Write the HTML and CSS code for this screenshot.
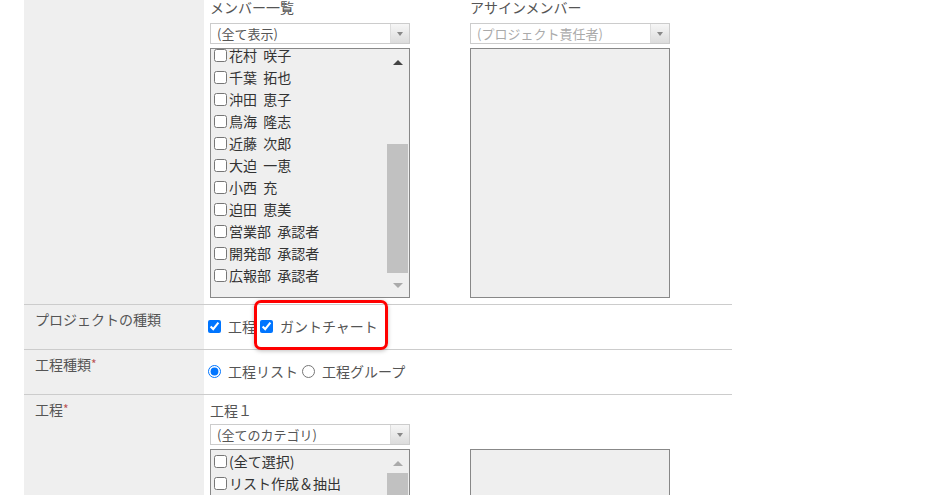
FILE: index.html
```html
<!DOCTYPE html>
<html>
	<head>
		<meta charset="UTF-8">
		<title>プロジェクト設定</title>
		<link rel="stylesheet" href="styles.css">
	</head>
	<body>
		<div class="form">
			<div class="row row-members">
				<div class="label"></div>
				<div class="field">
					<div class="pick">
						<div class="pick-title">メンバー一覧</div>
						<div class="select"><span>(全て表示)</span><i class="drop"></i></div>
						<div class="listbox tall">
							<ul class="items shifted">
								<li><input type="checkbox">花村 咲子</li>
								<li><input type="checkbox">千葉 拓也</li>
								<li><input type="checkbox">沖田 恵子</li>
								<li><input type="checkbox">鳥海 隆志</li>
								<li><input type="checkbox">近藤 次郎</li>
								<li><input type="checkbox">大迫 一恵</li>
								<li><input type="checkbox">小西 充</li>
								<li><input type="checkbox">迫田 恵美</li>
								<li><input type="checkbox">営業部 承認者</li>
								<li><input type="checkbox">開発部 承認者</li>
								<li><input type="checkbox">広報部 承認者</li>
							</ul>
							<div class="bar">
								<span class="up"></span>
								<span class="gap g1"></span>
								<span class="thumb t1"></span>
								<span class="down"></span>
							</div>
						</div>
					</div>
					<div class="pick">
						<div class="pick-title">アサインメンバー</div>
						<div class="select off"><span>(プロジェクト責任者)</span><i class="drop"></i></div>
						<div class="listbox tall"></div>
					</div>
				</div>
			</div>

			<div class="row">
				<div class="label">プロジェクトの種類</div>
				<div class="field opts">
					<label><input type="checkbox" checked>工程</label>
					<label class="marked"><input type="checkbox" checked>ガントチャート</label>
				</div>
			</div>

			<div class="row">
				<div class="label">工程種類<em>*</em></div>
				<div class="field opts">
					<label><input type="radio" name="kind" checked>工程リスト</label>
					<label><input type="radio" name="kind">工程グループ</label>
				</div>
			</div>

			<div class="row">
				<div class="label">工程<em>*</em></div>
				<div class="field">
					<div class="pick">
						<div class="pick-title">工程１</div>
						<div class="select"><span>(全てのカテゴリ)</span><i class="drop"></i></div>
						<div class="listbox">
							<ul class="items">
								<li><input type="checkbox">(全て選択)</li>
								<li><input type="checkbox">リスト作成＆抽出</li>
								<li><input type="checkbox">顧客リスト確認</li>
							</ul>
							<div class="bar">
								<span class="up dim"></span>
								<span class="thumb t2"></span>
							</div>
						</div>
					</div>
					<div class="pick">
						<div class="pick-title"></div>
						<div class="select blank"></div>
						<div class="listbox"></div>
					</div>
				</div>
			</div>
		</div>
	</body>
</html>
```

FILE: styles.css
```css
body{
	margin: 0;
	background: #fff;
	font-family: "Noto Sans CJK JP", "Liberation Sans", sans-serif;
	font-size: 14px;
	color: #555;
	overflow: hidden;
}
.form{
	width: 708px;
	margin-left: 24px;
}
.row{
	display: flex;
	border-bottom: 1px solid #ccc;
}
.label{
	width: 169px;
	flex: none;
	background: #efefef;
	padding: 4px 0 0 11px;
	line-height: 20px;
}
.label em{
	font-style: normal;
	color: #b55;
	font-size: 12px;
	vertical-align: top;
}
.field{
	flex: 1;
	display: flex;
	gap: 60px;
	padding: 0 0 0 6px;
}
.row-members .field{
	padding-bottom: 6px;
}
.row-members .label{
	height: 300px;
}

/* member / process pickers */
.pick{
	width: 200px;
}
.pick-title{
	height: 15px;
	line-height: 15px;
	margin-top: 0;
	margin-bottom: 8px;
	white-space: nowrap;
}
.row:last-child .pick-title{
	margin-top: 8px;
	margin-bottom: 6px;
}
.select{
	height: 19px;
	border: 1px solid #ccc;
	background: #fff;
	display: flex;
	align-items: center;
	font-size: 13px;
	color: #555;
	margin-bottom: 4px;
}
.select span{
	flex: 1;
	padding-left: 6px;
	white-space: nowrap;
}
.select.off span{
	color: #aaa;
}
.select.blank{
	border-color: transparent;
	background: transparent;
}
.drop{
	width: 18px;
	height: 19px;
	border-left: 1px solid #ddd;
	background: linear-gradient(#f6f6f6, #dcdcdc);
	position: relative;
}
.drop::after{
	content: "";
	position: absolute;
	left: 6px;
	top: 8px;
	border-left: 3px solid transparent;
	border-right: 3px solid transparent;
	border-top: 4px solid #888;
}
.listbox{
	height: 248px;
	border: 1px solid #888;
	background: #efefef;
	display: flex;
	overflow: hidden;
}
.items{
	flex: 1;
	list-style: none;
	margin: 0;
	padding: 0;
	color: #333;
}
.items.shifted{
	margin-top: -5px;
}
.items li{
	height: 22px;
	line-height: 22px;
	white-space: nowrap;
	display: flex;
	align-items: center;
	word-spacing: 3px;
}
.items input{
	margin: 0 2px 0 3px;
	width: 13px;
	height: 13px;
}

/* drawn scrollbar */
.bar{
	width: 21px;
	flex: none;
	margin-right: 1px;
	display: flex;
	flex-direction: column;
	align-items: center;
}
.up, .down{
	width: 0;
	height: 0;
	border-left: 5px solid transparent;
	border-right: 5px solid transparent;
	flex: none;
}
.up{
	border-bottom: 5px solid #444;
	margin-top: 11px;
}
.up.dim{
	border-bottom-color: #aaa;
}
.down{
	border-top: 5px solid #aaa;
	margin-top: 10px;
}
.gap.g1{
	height: 79px;
}
.thumb{
	width: 21px;
	background: #c1c1c1;
	flex: none;
}
.thumb.t1{
	height: 129px;
}
.thumb.t2{
	height: 60px;
	margin-top: 7px;
}

/* option rows */
.opts{
	display: flex;
	gap: 0;
	align-items: flex-start;
	padding: 11px 0 12px 0;
	height: 21px;
}
.opts label{
	display: flex;
	align-items: center;
	line-height: 21px;
	margin-right: 0;
	position: relative;
}
.opts input{
	margin: 0 7px 0 4px;
	width: 13px;
	height: 13px;
}
.marked::before{
	content: "";
	position: absolute;
	left: -2px;
	top: -16px;
	width: 128px;
	height: 44px;
	border: 3px solid #f00;
	border-radius: 7px;
	box-shadow: 0 1px 4px rgba(0,0,0,0.25);
}
```
